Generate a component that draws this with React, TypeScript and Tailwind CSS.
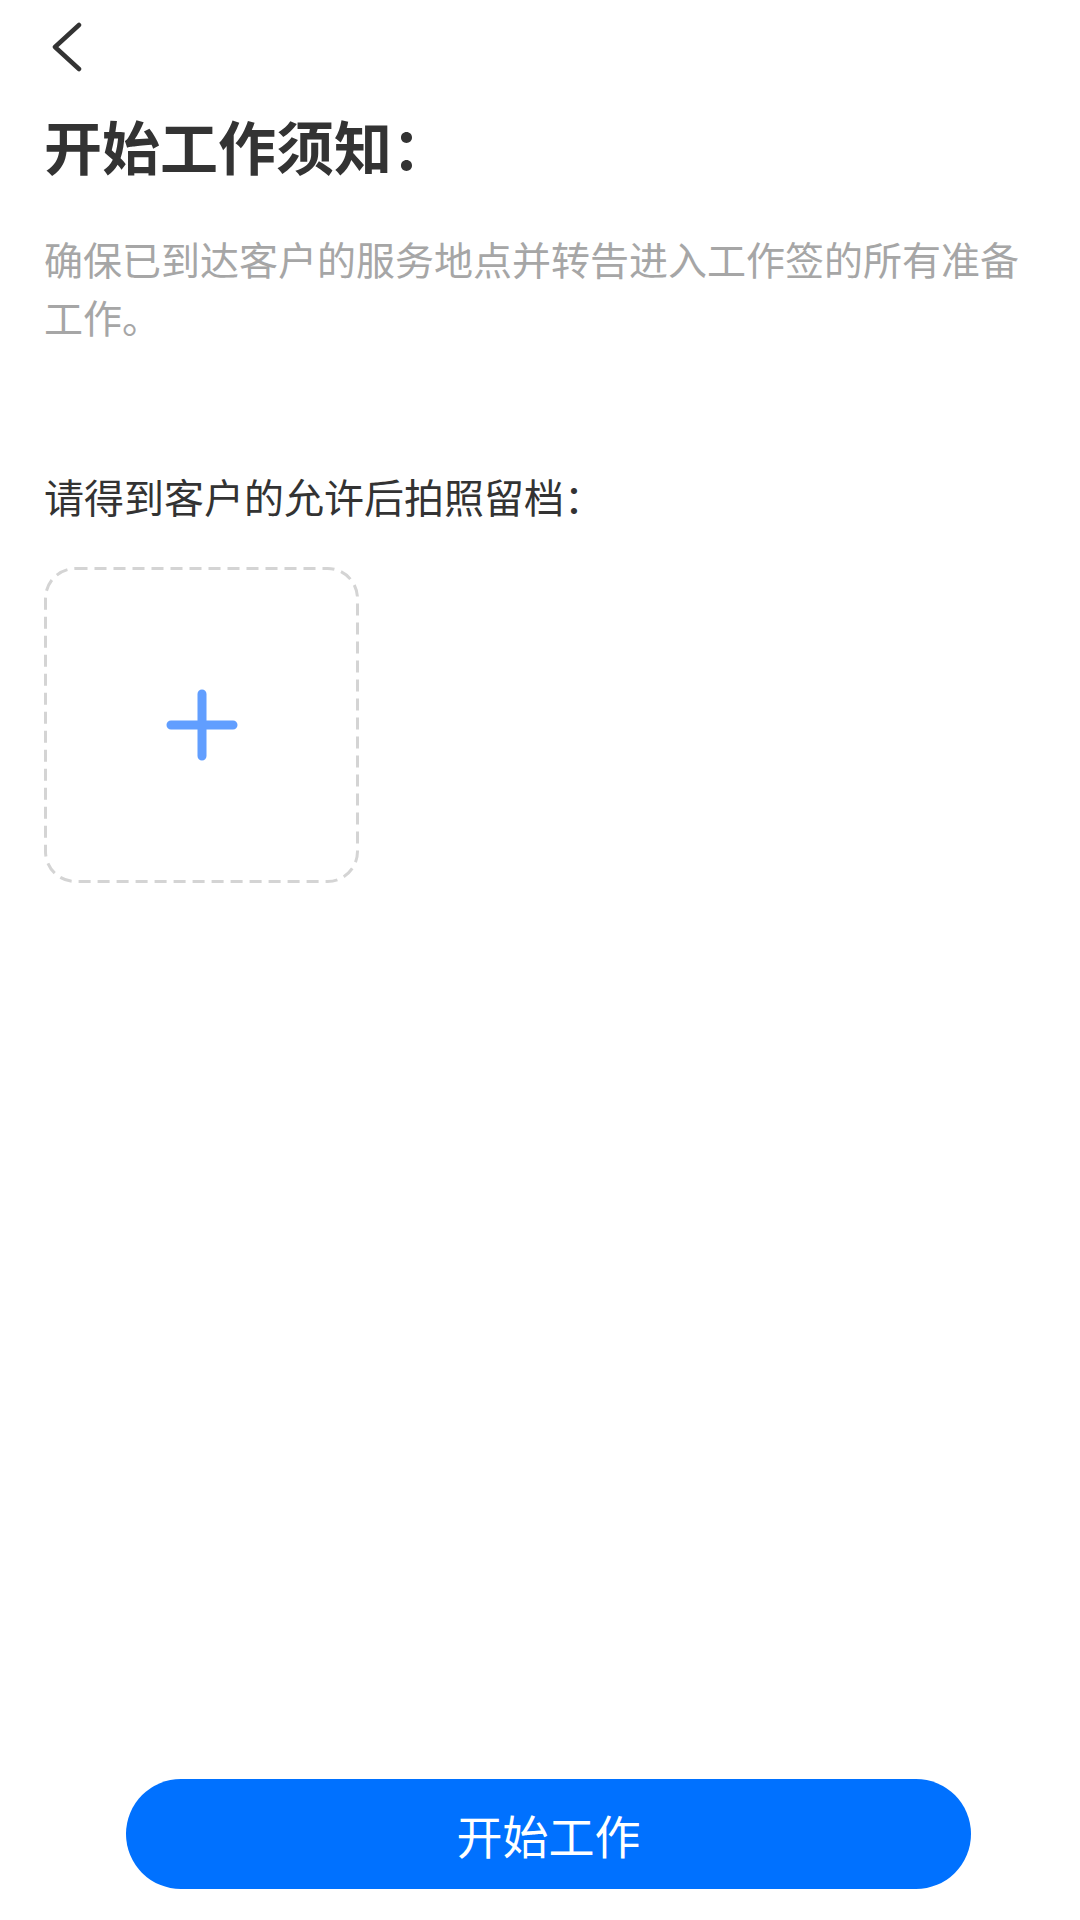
import { useState } from 'react';

export default function App() {
  const [photos] = useState<string[]>([]);

  return (
    <div className="w-[1080px] h-[1920px] bg-white flex flex-col font-['Noto_Sans_CJK_SC','Noto_Sans',sans-serif]">
      {/* back bar */}
      <div className="h-[94px] pl-[50px] flex items-center">
        <button className="w-[34px] h-[50px] flex items-center justify-center">
          <svg width="34" height="50" viewBox="0 0 34 50" fill="none">
            <polyline points="29,3 5,25 29,47" stroke="#333333" strokeWidth="4.5" strokeLinecap="round" strokeLinejoin="round" />
          </svg>
        </button>
      </div>

      <div className="px-[44px] flex flex-col">
        <h1 className="mt-[16px] text-[58px] leading-[70px] font-bold text-[#333333]">开始工作须知：</h1>
        <p className="mt-[49px] text-[39px] leading-[58px] text-[#a6a6a6]">
          确保已到达客户的服务地点并转告进入工作签的所有准备工作。
        </p>

        <p className="mt-[123px] text-[40px] leading-[56px] text-[#333333]">请得到客户的允许后拍照留档：</p>

        {/* photo picker */}
        <div className="mt-[43px] flex gap-4">
          {photos.length === 0 && (
            <div className="relative w-[315px] h-[316px] flex items-center justify-center">
              <svg className="absolute inset-0" width="315" height="316" viewBox="0 0 315 316" fill="none">
                <rect x="1.5" y="1.5" width="312" height="313" rx="30" stroke="#d4d4d4" strokeWidth="3" strokeDasharray="12 7" />
              </svg>
              <svg width="72" height="72" viewBox="0 0 72 72" fill="none">
                <path d="M36 5v62M5 36h62" stroke="#619eff" strokeWidth="9" strokeLinecap="round" />
              </svg>
            </div>
          )}
        </div>
      </div>

      <div className="flex-1" />

      <div className="pl-[126px] pb-[31px]">
        <button className="w-[845px] h-[110px] rounded-full bg-[#0071ff] text-white text-[46px] flex items-center justify-center">
          开始工作
        </button>
      </div>
    </div>
  );
}
